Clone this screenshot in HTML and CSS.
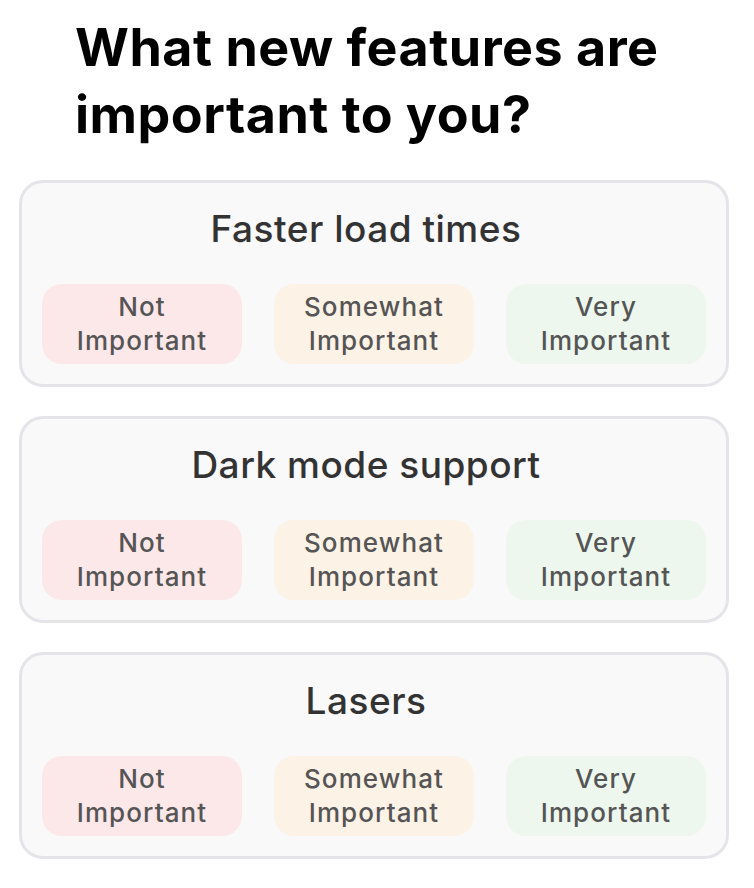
FILE: index.html
```html
<!DOCTYPE html>
<html lang="en">
<head>
<meta charset="utf-8">
<title>Feature survey</title>
<link rel="stylesheet" href="styles.css">
</head>
<body>
<main class="survey">
  <h1 class="survey-title">What new features are important to you?</h1>
  <section class="card">
    <h2 class="card-title">Faster load times</h2>
    <div class="options">
      <button class="opt opt-not">Not<br>Important</button>
      <button class="opt opt-some">Somewhat<br>Important</button>
      <button class="opt opt-very">Very<br>Important</button>
    </div>
  </section>
  <section class="card">
    <h2 class="card-title">Dark mode support</h2>
    <div class="options">
      <button class="opt opt-not">Not<br>Important</button>
      <button class="opt opt-some">Somewhat<br>Important</button>
      <button class="opt opt-very">Very<br>Important</button>
    </div>
  </section>
  <section class="card">
    <h2 class="card-title">Lasers</h2>
    <div class="options">
      <button class="opt opt-not">Not<br>Important</button>
      <button class="opt opt-some">Somewhat<br>Important</button>
      <button class="opt opt-very">Very<br>Important</button>
    </div>
  </section>
</main>
</body>
</html>
```

FILE: styles.css
```css
* { box-sizing: border-box; }
html, body { margin: 0; padding: 0; background: #ffffff; }
body { font-family: Inter, "Noto Sans", "Liberation Sans", sans-serif; }

.survey {
  width: 710px;
  margin: 0 0 0 19px;
  padding-top: 14px;
  display: flex;
  flex-direction: column;
  gap: 29px;
}

.survey-title {
  margin: 0 0 3px 56px;
  font-size: 52px;
  line-height: 67px;
  font-weight: 700;
  color: #000;
  letter-spacing: 0.5px;
}

.card {
  height: 207px;
  border: 3px solid #e4e4e9;
  border-radius: 24px;
  background: #f9f9f9;
  padding: 24px 20px 20px;
  display: flex;
  flex-direction: column;
  justify-content: space-between;
}

.card-title {
  margin: 0;
  padding-right: 16px;
  text-align: center;
  font-size: 37px;
  line-height: 44px;
  font-weight: 500;
  color: #333333;
  letter-spacing: 0.5px;
}

.options {
  display: flex;
  gap: 32px;
}

.opt {
  flex: 1;
  height: 80px;
  border: none;
  border-radius: 20px;
  padding: 0;
  font-family: inherit;
  font-size: 26px;
  line-height: 34px;
  font-weight: 500;
  color: #555555;
  letter-spacing: 1.1px;
  text-align: center;
}

.opt-not { background: #fde8e9; }
.opt-some { background: #fdf2e6; }
.opt-very { background: #edf7ed; }
```
